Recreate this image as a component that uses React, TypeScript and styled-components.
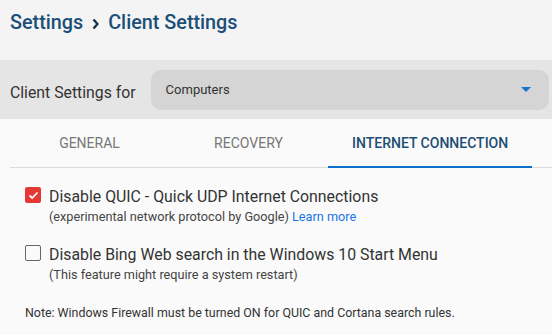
import React, { useState } from 'react';
import styled, { createGlobalStyle } from 'styled-components';

const GlobalStyle = createGlobalStyle`
  html, body {
    margin: 0;
    padding: 0;
    background: #fafafa;
    font-family: Roboto, 'Liberation Sans', sans-serif;
  }
`;

const Page = styled.div`
  width: 552px;
  min-height: 335px;
  background: #fafafa;
`;

const Header = styled.header`
  height: 60px;
  box-sizing: border-box;
  padding: 11px 10px 0;
  background: #f4f4f4;
  display: flex;
  align-items: flex-start;
`;

const Crumbs = styled.h1`
  margin: 0;
  display: flex;
  align-items: center;
  gap: 9px;
  font-size: 19.8px;
  line-height: 24px;
  font-weight: 500;
  color: #1c4f78;
`;

const Chevron = styled.svg`
  width: 7px;
  height: 12px;
  margin: 1px 0 0;
`;

const ScopeBar = styled.div`
  height: 59px;
  box-sizing: border-box;
  padding: 0 3px 0 10px;
  background: #e5e5e5;
  display: flex;
  align-items: center;
  gap: 15px;
`;

const ScopeLabel = styled.span`
  font-size: 15.8px;
  color: #333;
  padding-top: 6px;
`;

const Select = styled.div`
  flex: 1;
  height: 40px;
  box-sizing: border-box;
  padding: 0 18px 0 15px;
  border-radius: 10px;
  background: #d5d5d5;
  display: flex;
  align-items: center;
  justify-content: space-between;
  font-size: 13px;
  color: #333;
`;

const Caret = styled.span`
  width: 0;
  height: 0;
  border-left: 5px solid transparent;
  border-right: 5px solid transparent;
  border-top: 5px solid #1a73c8;
`;

const Content = styled.main`
  padding-left: 10px;
`;

const Tabs = styled.nav`
  display: flex;
  height: 48px;
  border-bottom: 1px solid #dcdcdc;
`;

const Tab = styled.button<{ $active?: boolean }>`
  min-width: 159px;
  padding: 0 24px;
  margin-bottom: -1px;
  border: none;
  border-bottom: 2px solid ${(p) => (p.$active ? '#0a6fc9' : 'transparent')};
  background: transparent;
  font-family: inherit;
  font-size: 14px;
  font-weight: ${(p) => (p.$active ? 500 : 400)};
  color: ${(p) => (p.$active ? '#1d4d73' : '#777')};
  text-transform: uppercase;
  cursor: pointer;
`;

const Options = styled.section`
  padding: 19px 0 0 15px;
  display: flex;
  flex-direction: column;
  gap: 19px;
`;

const Option = styled.label`
  display: flex;
  align-items: flex-start;
  gap: 8px;
  cursor: pointer;
`;

const Box = styled.span<{ $checked?: boolean }>`
  flex: none;
  width: 16px;
  height: 16px;
  box-sizing: border-box;
  border-radius: 2px;
  border: ${(p) => (p.$checked ? 'none' : '1.5px solid #666')};
  background: ${(p) => (p.$checked ? '#e53935' : 'transparent')};
  display: flex;
  align-items: center;
  justify-content: center;
`;

const OptionText = styled.div`
  display: flex;
  flex-direction: column;
`;

const OptionTitle = styled.span`
  font-size: 15.85px;
  line-height: 20px;
  color: #333;
`;

const OptionHint = styled.span`
  font-size: 12.7px;
  line-height: 18px;
  margin-top: 1px;
  color: #444;
`;

const Link = styled.a`
  color: #1a73e8;
  text-decoration: none;
`;

const Note = styled.p`
  margin: 20px 0 0 15px;
  font-size: 12.4px;
  line-height: 18px;
  color: #333;
`;

const tabs = ['General', 'Recovery', 'Internet Connection'];

function Check() {
  return (
    <svg width="11" height="9" viewBox="0 0 11 9">
      <path d="M1.5 4.5 L4.2 7 L9.5 1.5" fill="none" stroke="#fff" strokeWidth="1.8" />
    </svg>
  );
}

export default function App() {
  const [active, setActive] = useState(2);
  const [quic, setQuic] = useState(true);
  const [bing, setBing] = useState(false);

  return (
    <Page>
      <GlobalStyle />
      <Header>
        <Crumbs>
          <span>Settings</span>
          <Chevron viewBox="0 0 7 12">
            <path d="M1.5 1.5 L5.5 6 L1.5 10.5" fill="none" stroke="#1c2e40" strokeWidth="2.4" />
          </Chevron>
          <span>Client Settings</span>
        </Crumbs>
      </Header>
      <ScopeBar>
        <ScopeLabel>Client Settings for</ScopeLabel>
        <Select>
          <span>Computers</span>
          <Caret />
        </Select>
      </ScopeBar>
      <Content>
        <Tabs>
          {tabs.map((t, i) => (
            <Tab key={t} $active={i === active} onClick={() => setActive(i)}>
              {t}
            </Tab>
          ))}
        </Tabs>
        <Options>
          <Option onClick={() => setQuic(!quic)}>
            <Box $checked={quic}>{quic && <Check />}</Box>
            <OptionText>
              <OptionTitle>Disable QUIC - Quick UDP Internet Connections</OptionTitle>
              <OptionHint>
                (experimental network protocol by Google) <Link href="#">Learn more</Link>
              </OptionHint>
            </OptionText>
          </Option>
          <Option onClick={() => setBing(!bing)}>
            <Box $checked={bing}>{bing && <Check />}</Box>
            <OptionText>
              <OptionTitle>Disable Bing Web search in the Windows 10 Start Menu</OptionTitle>
              <OptionHint>(This feature might require a system restart)</OptionHint>
            </OptionText>
          </Option>
        </Options>
        <Note>Note: Windows Firewall must be turned ON for QUIC and Cortana search rules.</Note>
      </Content>
    </Page>
  );
}
